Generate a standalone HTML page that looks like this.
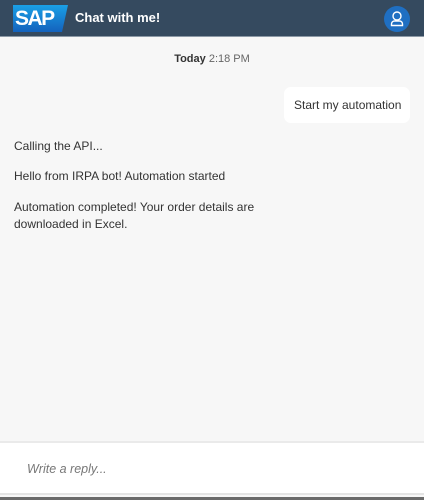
<!DOCTYPE html>
<html><head><meta charset="utf-8"><style>
*{margin:0;padding:0;box-sizing:border-box}
body{width:424px;height:500px;background:#f7f7f7;font-family:"Liberation Sans",sans-serif;position:relative;overflow:hidden}
.hdr{position:absolute;left:0;top:0;width:424px;height:37px;background:#354a5f;border-bottom:1px solid #8c99a6}
.logo{position:absolute;left:13px;top:5px;width:55px;height:27px;background:linear-gradient(#1aa0e6,#1462bd);clip-path:polygon(0 0,100% 0,49px 100%,0 100%);color:#fff;font-weight:bold;font-size:21px;line-height:27px;padding-left:2px;letter-spacing:-1.5px}
.title{position:absolute;left:75px;top:10px;color:#fff;font-weight:bold;font-size:13px}
.av{position:absolute;left:384px;top:6px;width:26px;height:26px;border-radius:50%;background:#1f6fc2}
.t{position:absolute;top:53px;left:0;width:424px;text-align:center;font-size:11px;color:#666}
.t b{color:#333}
.bub{position:absolute;left:284px;top:87px;width:126px;height:36px;background:#fff;border-radius:7px;font-size:12px;color:#333;line-height:36px;padding-left:10px}
.m{position:absolute;left:14px;font-size:12px;color:#333;line-height:17px}
.in{position:absolute;left:0;top:441px;width:424px;height:54px;background:#fff;border-top:2px solid #eaeaea;border-bottom:2px solid #e4e4e4}
.in span{position:absolute;left:27px;top:19px;font-style:italic;font-size:12.5px;color:#777}
.bl{position:absolute;left:0;top:497px;width:424px;height:3px;background:#6a6a6a}
</style></head><body>
<div class="hdr"><div class="logo">SAP</div><div class="title">Chat with me!</div>
<div class="av"><svg width="26" height="26" viewBox="0 0 26 26"><circle cx="13" cy="10" r="4" fill="none" stroke="#fff" stroke-width="1.4"/><path d="M7.5 19.5v-1.5a3 3 0 0 1 3-3h5a3 3 0 0 1 3 3v1.5z" fill="none" stroke="#fff" stroke-width="1.4"/></svg></div></div>
<div class="t"><b>Today</b> 2:18 PM</div>
<div class="bub">Start my automation</div>
<div class="m" style="top:138px">Calling the API...</div>
<div class="m" style="top:168px">Hello from IRPA bot! Automation started</div>
<div class="m" style="top:199px">Automation completed! Your order details are<br>downloaded in Excel.</div>
<div class="in"><span>Write a reply...</span></div>
<div class="bl"></div>
</body></html>
